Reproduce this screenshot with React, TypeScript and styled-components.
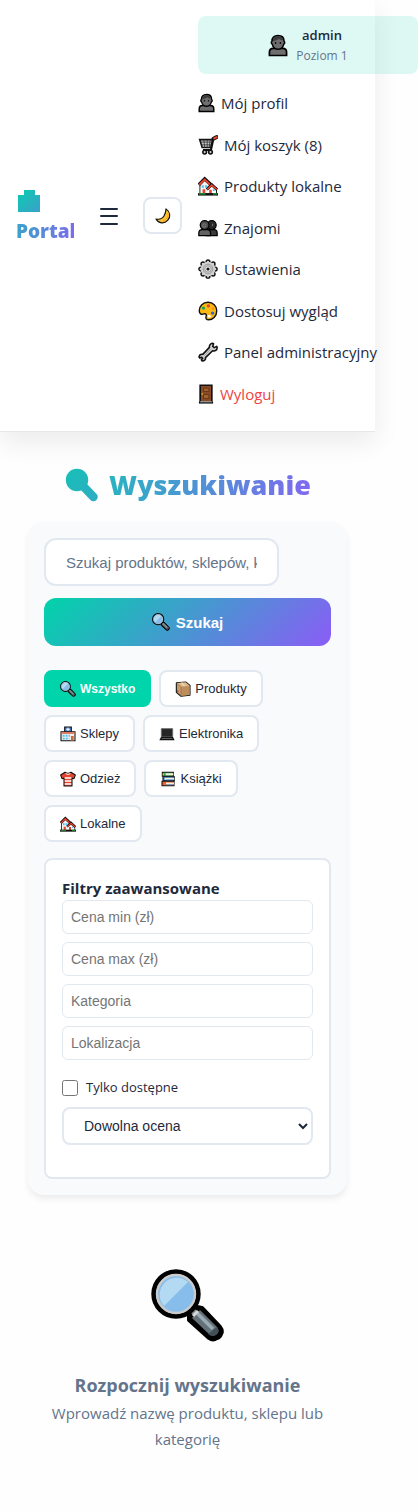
import React from 'react';
import styled, { createGlobalStyle, css } from 'styled-components';

const color = {
  text: '#1e293b',
  muted: '#64748b',
  line: '#e2e8f0',
  panel: '#f8fafc',
  mint: '#00d4aa',
  violet: '#8b5cf6',
  danger: '#ef4444',
};
const gradient = `linear-gradient(135deg, ${color.mint} 0%, ${color.violet} 100%)`;

const GlobalStyle = createGlobalStyle`
  *, *::before, *::after { box-sizing: border-box; margin: 0; padding: 0; }
  body {
    background: #fefefe;
    color: ${color.text};
    font-family: 'Open Sans', 'Noto Sans', sans-serif;
    font-size: 15px;
    line-height: 26px;
    overflow-x: hidden;
  }
  button, input, select { font-family: 'Liberation Sans', Arial, sans-serif; color: inherit; }
`;

/* ---------- icons ---------- */

const Svg = styled.svg<{ $w: number; $h: number }>`
  display: block;
  flex: none;
  width: ${(p) => p.$w}px;
  height: ${(p) => p.$h}px;
`;

type IconProps = { size?: number };
const ink = '#111';

const UserIcon = ({ size = 20 }: IconProps) => (
  <Svg $w={Math.round(size * 0.86)} $h={size} viewBox="0 0 21 24" aria-hidden="true">
    <path d="M1.5 22.5v-3.5q0-4 4-4h10q4 0 4 4v3.5z" fill="#6e6e6e" stroke="#000" strokeWidth="1.8" />
    <path d="M10.5 1.5c4.200 0 6.300 2.400 6.300 5.900 1 .6 1 2.700-.2 3.200-.8 3-3 5.400-6.100 5.400s-5.300-2.400-6.100-5.400c-1.200-.5-1.200-2.600-.2-3.200 0-3.500 2.100-5.900 6.300-5.900z" fill="#6e6e6e" stroke="#000" strokeWidth="1.6" />
    <path d="M5.200 7.500C5.200 4 7.500 2.300 10.500 2.300S15.800 4 15.800 6.600c-2 0-3.400-.6-4.300-1.600-1.400 1.300-4 2-6.300 2.500z" fill="#3b3b3b" />
    <path d="M8 8.300v2M13 8.300v2" stroke="#111" strokeWidth="1.500" />
  </Svg>
);

const CartIcon = () => (
  <Svg $w={20} $h={20} viewBox="0 0 24 24" aria-hidden="true">
    <path d="M2 5.500h15.500L15.500 15H5z" fill="#c9c9c9" stroke={ink} strokeWidth="1.900" />
    <path d="M3 8.500h13.500M4 11.800h12M7 6l1 9M11 6v9M14.500 6l-1 9" stroke="#333" strokeWidth="1" />
    <path d="M22 3l-3.500 1.200L15.500 18H6" fill="none" stroke={ink} strokeWidth="2.600" />
    <path d="M18.500 4.500l4-2" stroke={ink} strokeWidth="4.600" strokeLinecap="round" />
    <path d="M19.500 4l2.800-1.400" stroke="#e0452f" strokeWidth="2.600" strokeLinecap="round" />
    <circle cx="8" cy="20.500" r="2.200" fill="#ddd" stroke={ink} strokeWidth="1.900" />
    <circle cx="15" cy="20.500" r="2.200" fill="#ddd" stroke={ink} strokeWidth="1.900" />
  </Svg>
);

const HousesIcon = ({ size = 20 }: IconProps) => (
  <Svg $w={size} $h={size} viewBox="0 0 24 24" aria-hidden="true">
    <path d="M2.500 9.500V21H22v-7h-8V9.500L8 4z" fill="#fff" stroke={ink} strokeWidth="1.500" />
    <path d="M3 21V10l5-5 5.500 5v11z" fill="#f4f4f4" />
    <path d="M11 21v-6.500l5.500-4 5 4V21z" fill="#fff" />
    <path d="M1 10.500L8 3.500l7 6.500" fill="none" stroke={ink} strokeWidth="4" />
    <path d="M1.500 10.500L8 4.200l6.500 6.300" fill="none" stroke="#e8432e" strokeWidth="2.200" />
    <path d="M10.500 16l6-5.500 6.500 6" fill="none" stroke={ink} strokeWidth="3.600" />
    <path d="M11 16l5.500-5 6 5" fill="none" stroke="#e8432e" strokeWidth="2" />
    <path d="M4.500 11h2.500v3H4.500zM8.500 11H11v3H8.500zM17.800 16h2.200v2h-2.200z" fill="#4fc4ee" />
    <path d="M5.500 16h3.200v5H5.500zM13.500 16.500h3V21h-3z" fill="#e8432e" />
    <path d="M0 22h24" stroke={ink} strokeWidth="3" />
    <path d="M1 21.500h8M18 21.500h5" stroke="#1faa35" strokeWidth="1.600" />
  </Svg>
);

const PeopleIcon = () => (
  <Svg $w={20} $h={20} viewBox="0 0 24 24" aria-hidden="true">
    <path d="M10 21v-4q1-3 4-3h5q4 0 4 4v3z" fill="#3a3a3a" stroke="#000" strokeWidth="1.500" />
    <circle cx="16.500" cy="8.500" r="5.300" fill="#2b2b2b" stroke="#000" strokeWidth="1.500" />
    <path d="M1 21v-3q0-4 4-4h6q4 0 4 4v3z" fill="#636363" stroke="#000" strokeWidth="1.500" />
    <circle cx="8" cy="8.500" r="5.300" fill="#4c4c4c" stroke="#000" strokeWidth="1.500" />
    <circle cx="7.500" cy="9" r="2" fill="none" stroke="#8a8a8a" strokeWidth="1" />
    <path d="M17.500 7v2.500" stroke="#777" strokeWidth="1.200" />
  </Svg>
);

const teeth = [0, 1, 2, 3, 4, 5, 6, 7].map((i) => {
  const a = (i * Math.PI) / 4;
  return { x: 12 + 8.6 * Math.cos(a), y: 12 + 8.6 * Math.sin(a) };
});

const GearIcon = () => (
  <Svg $w={20} $h={20} viewBox="0 0 24 24" aria-hidden="true">
    {teeth.map((t, i) => (
      <circle key={i} cx={t.x} cy={t.y} r="2.300" fill="#cfcfcf" stroke={ink} strokeWidth="1.700" />
    ))}
    <circle cx="12" cy="12" r="8.800" fill="#d2d2d2" />
    <circle cx="12" cy="12" r="5.800" fill="none" stroke="#8f8f8f" strokeWidth="1" />
    <circle cx="12" cy="12" r="3.800" fill="#ededed" stroke="#8a8a8a" strokeWidth="1" />
    <circle cx="12" cy="12" r="1.900" fill={ink} />
  </Svg>
);

const PaletteIcon = () => (
  <Svg $w={20} $h={20} viewBox="0 0 24 24" aria-hidden="true">
    <path d="M12 1.500c6 0 10.500 4.300 10.500 10.200 0 6.300-4.500 10.800-9.500 10.800-3.300 0-4-1.800-3.300-3.800.9-2.500-.3-4-2.700-3.200-3 1-5.500-.2-5.500-3.700C1.500 6 6 1.500 12 1.500z" fill="#fdb913" stroke={ink} strokeWidth="1.700" />
    <circle cx="6.500" cy="8.500" r="2" fill="#18a558" />
    <circle cx="12.500" cy="5.800" r="2" fill="#e8432e" />
    <circle cx="18" cy="9" r="1.600" fill="#f58b1f" />
    <circle cx="17.500" cy="14.500" r="2" fill="#2d62d8" />
    <circle cx="13.500" cy="18.300" r="1.800" fill="#fff" />
  </Svg>
);

const WrenchIcon = () => (
  <Svg $w={20} $h={20} viewBox="0 0 24 24" aria-hidden="true">
    <path d="M17.500 1.500l1.200.5-1 3.300 1.800 1.400 3-1.500.5 1.300c0 3-2.500 4.800-5.500 4L9 18.700c.5 2.300-1.200 4-4 4l-1-1.400 1.700-1.600-1.200-1.400-2.300 1-1-1.300c.5-2.500 2.300-3.600 4.500-3.200l8-8.300c-.6-2.500 1.300-4.700 3.800-5z" fill="#d0d0d0" stroke={ink} strokeWidth="1.900" strokeLinejoin="round" />
    <path d="M7.500 16.500l8-8.300" stroke="#a5a5a5" strokeWidth="1.200" />
  </Svg>
);

const DoorIcon = () => (
  <Svg $w={16} $h={20} viewBox="0 0 19 24" aria-hidden="true">
    <path d="M2.500 1.500h14v20h-14z" fill="#8a4b25" stroke={ink} strokeWidth="2" />
    <path d="M6.500 5h6.500v4H6.500zM6.500 12.500h6.500v5H6.500z" fill="#a5602f" stroke="#5f3115" strokeWidth="1" />
    <circle cx="5" cy="12" r="1" fill="#fdc62e" />
    <path d="M1 22.300h17" stroke={ink} strokeWidth="2.400" />
    <path d="M2.500 21.300h14" stroke="#b5b5b5" strokeWidth="1.300" />
  </Svg>
);

const MoonIcon = () => (
  <Svg $w={16} $h={16} viewBox="0 0 24 24" aria-hidden="true">
    <path d="M16.500 1.300c6.500 4.500 7.500 12.200 2.500 17.400C14 24 5.500 23.600 1.500 16.500c5.500 1 9.500-.5 12-4.500 2-3.300 2.900-6.500 3-10.700z" fill="#fdc236" stroke={ink} strokeWidth="1.700" strokeLinejoin="round" />
    <path d="M19.500 8c1 5-2 10-8 11.500" fill="none" stroke="#f29a1c" strokeWidth="1.300" />
  </Svg>
);

const LensIcon = ({ size = 18 }: IconProps) => (
  <Svg $w={size} $h={size} viewBox="0 0 73 73" aria-hidden="true">
    <path d="M38 45l8-7 5 1 18 19q3 4 1 7-1 3-4 4-4 3-8 0L38 51z" fill="#000" stroke="#000" strokeWidth="4" strokeLinejoin="round" />
    <path d="M36 40l4-4 7 7-4 4z" fill="#7c888d" />
    <path d="M41 49l8-8 17 17q3 4 0 7t-7 1z" fill="#637278" />
    <path d="M46 44l16 16" stroke="#9cabb3" strokeWidth="3.500" />
    <path d="M42 47l5-5" stroke="#d6d6d6" strokeWidth="3" />
    <path d="M57 65l9-7q3 4 0 7-4 4-9 0z" fill="#434f56" />
    <circle cx="25" cy="25" r="22.300" fill="#86bdeb" stroke="#000" strokeWidth="4.800" />
    <circle cx="25" cy="25" r="19" fill="none" stroke="#cbcbcb" strokeWidth="2.400" />
    <path d="M13 37A17 17 0 0 1 37 13z" fill="#b3daf2" />
  </Svg>
);

const BoxIcon = () => (
  <Svg $w={16} $h={16} viewBox="0 0 24 24" aria-hidden="true">
    <path d="M2 2.500l14-1 6.500 5V21.500L9 23 2 17z" fill="#c69c6d" stroke={ink} strokeWidth="1.600" strokeLinejoin="round" />
    <path d="M9 8.500l13-1.500V21L9 22.500z" fill="#bd8d5c" />
    <path d="M2.500 3L9 8.500 22 7l-6-5z" fill="#dcb98d" />
    <path d="M2.500 3.500L9 8.500v14" fill="none" stroke="#8f6a44" strokeWidth="1" />
    <path d="M14.500 7l-5-4.300" stroke="#efd9b8" strokeWidth="2" />
    <path d="M4 14v3" stroke="#e33" strokeWidth="2" />
  </Svg>
);

const ShopIcon = () => (
  <Svg $w={16} $h={16} viewBox="0 0 24 24" aria-hidden="true">
    <path d="M7 1.500h10V9H7z" fill="#4f86d8" stroke={ink} strokeWidth="1.600" />
    <path d="M12 2.500v5M9.500 5h5" stroke="#fff" strokeWidth="1.500" />
    <path d="M1.500 8.500h21V22h-21z" fill="#f4ece8" stroke={ink} strokeWidth="1.600" />
    <path d="M2 10.500h20" stroke="#e06a50" strokeWidth="2.500" />
    <path d="M4 14.500h11" stroke="#4fc4ee" strokeWidth="3" strokeDasharray="3 1.500" />
    <path d="M4 19h10" stroke="#4fc4ee" strokeWidth="2.500" strokeDasharray="3 1.500" />
    <path d="M16.500 15h4v7h-4z" fill="#c9683c" />
  </Svg>
);

const LaptopIcon = () => (
  <Svg $w={16} $h={16} viewBox="0 0 24 24" aria-hidden="true">
    <path d="M3.500 4h17v12.500h-17z" fill="#252525" stroke="#6b6b6b" strokeWidth="1.400" />
    <path d="M3 16.500h18l2.500 5H.5z" fill="#111" />
    <path d="M4 18.700h16" stroke="#888" strokeWidth="1" />
  </Svg>
);

const ShirtIcon = () => (
  <Svg $w={16} $h={16} viewBox="0 0 24 24" aria-hidden="true">
    <path d="M7.500 1.800q4.500 3 9 0L23 6l-2 5.500-3-1V22.500H6V10.500l-3 1L1 6z" fill="#e4452f" stroke={ink} strokeWidth="1.600" strokeLinejoin="round" />
    <path d="M7 10.500h10M7 15h10M7 19.500h10" stroke="#fff" strokeWidth="2" />
    <path d="M8.500 4q3.500 2 7 0" fill="none" stroke="#fff" strokeWidth="1.500" />
  </Svg>
);

const BooksIcon = () => (
  <Svg $w={16} $h={16} viewBox="0 0 24 24" aria-hidden="true">
    <path d="M3.500 2H20v6H3.500z" fill="#39a94a" stroke={ink} strokeWidth="1.600" />
    <path d="M4.500 8.500h17v6h-17z" fill="#3f8fdc" stroke={ink} strokeWidth="1.600" />
    <path d="M3 15.500h18v6.500H3z" fill="#f0602d" stroke={ink} strokeWidth="1.600" />
    <path d="M8.500 5H20M7 11.500h14.500M9 18.700h12" stroke="#f6eedc" strokeWidth="3" />
    <path d="M9 13.200h12M9 20.500h11" stroke="#3f8fdc" strokeWidth="1" />
    <path d="M4.800 3.500v3" stroke="#ffd83a" strokeWidth="1.500" />
  </Svg>
);

const BagMark = () => (
  <Svg $w={24} $h={30} viewBox="0 0 24 30" aria-hidden="true">
    <defs>
      <linearGradient id="bag" gradientUnits="userSpaceOnUse" x1="-1" y1="-1" x2="59" y2="59">
        <stop stopColor={color.mint} />
        <stop offset="1" stopColor={color.violet} />
      </linearGradient>
    </defs>
    <path d="M2 9h6V4h11v5h5v17H2z" fill="url(#bag)" />
  </Svg>
);

const LensMark = () => (
  <Svg $w={34} $h={34} viewBox="0 0 34 34" aria-hidden="true">
    <defs>
      <linearGradient id="lens" gradientUnits="userSpaceOnUse" x1="-30" y1="-30" x2="160" y2="160">
        <stop stopColor={color.mint} />
        <stop offset="1" stopColor={color.violet} />
      </linearGradient>
    </defs>
    <circle cx="13" cy="12" r="11.200" fill="url(#lens)" />
    <path d="M19 18l10.500 11" stroke="url(#lens)" strokeWidth="8.500" strokeLinecap="round" />
  </Svg>
);

/* ---------- layout ---------- */

const Page = styled.div`
  margin-right: 43px;
`;

const Header = styled.header`
  display: flex;
  align-items: center;
  gap: 16px;
  padding: 16px;
  background: #fff;
  border-bottom: 1px solid #e5e7eb;
  box-shadow: 0 10px 25px rgba(0, 0, 0, 0.08);
`;

const GradientText = styled.span<{ $angle: number; $from: string; $to: string }>`
  background: linear-gradient(${(p) => p.$angle}deg, ${(p) => p.$from} 0%, ${(p) => p.$to} 100%);
  background-clip: text;
  -webkit-background-clip: text;
  color: transparent;
`;

const Logo = styled.a`
  display: flex;
  flex: none;
  flex-direction: column;
  width: 58px;
  font-size: 19px;
  font-weight: 800;
  line-height: 30px;
  text-decoration: none;
`;

const MenuButton = styled.button`
  display: grid;
  place-items: center;
  flex: none;
  width: 37px;
  height: 40px;
  border: 0;
  background: none;
`;

const ThemeButton = styled.button`
  display: grid;
  place-items: center;
  flex: none;
  width: 39px;
  height: 37px;
  border: 2px solid ${color.line};
  border-radius: 8px;
  background: #fff;
`;

const Nav = styled.nav`
  flex: none;
  width: 220px;
  padding-bottom: 8px;
`;

const UserCard = styled.div`
  display: flex;
  align-items: center;
  justify-content: center;
  gap: 8px;
  padding: 8px;
  margin-bottom: 16px;
  border-radius: 8px;
  background: rgba(0, 212, 170, 0.13);
  text-align: center;
`;

const UserName = styled.div`
  font-size: 13px;
  font-weight: 600;
  line-height: 22px;
`;

const UserLevel = styled.div`
  color: ${color.muted};
  font-size: 12px;
  line-height: 20px;
`;

const NavList = styled.ul`
  display: flex;
  flex-direction: column;
  justify-content: space-between;
  min-height: 317px;
  list-style: none;
`;

const NavLink = styled.a<{ $danger?: boolean }>`
  display: flex;
  align-items: center;
  gap: 6px;
  color: ${(p) => (p.$danger ? color.danger : color.text)};
  text-decoration: none;
  white-space: nowrap;
`;

const Main = styled.main`
  padding: 32px 28px 60px;
`;

const Title = styled.h1`
  display: flex;
  align-items: center;
  justify-content: center;
  gap: 11px;
  margin-bottom: 16px;
  font-size: 27px;
  font-weight: 800;
  line-height: 42px;
`;

const SearchCard = styled.section`
  padding: 16px;
  border-radius: 16px;
  background: ${color.panel};
  box-shadow: 0 4px 6px rgba(0, 0, 0, 0.07);
`;

const SearchForm = styled.form`
  display: grid;
  gap: 12px;
  margin-bottom: 24px;
`;

const SearchInput = styled.input`
  width: 82%;
  height: 48px;
  padding: 0 20px;
  border: 2px solid ${color.line};
  border-radius: 12px;
  background: #fff;
  font-size: 15px;
  &::placeholder { color: ${color.muted}; }
`;

const SearchButton = styled.button`
  display: flex;
  align-items: center;
  justify-content: center;
  gap: 6px;
  height: 48px;
  border: 0;
  border-radius: 12px;
  background: ${gradient};
  color: #fff;
  font-size: 15px;
  font-weight: 700;
`;

const Chips = styled.div`
  display: flex;
  flex-wrap: wrap;
  gap: 8px;
  margin-bottom: 16px;
`;

const Chip = styled.button<{ $active?: boolean }>`
  display: flex;
  align-items: center;
  gap: 4px;
  height: 37px;
  padding: 0 14px;
  border: 2px solid ${color.line};
  border-radius: 8px;
  background: #fff;
  font-size: 13px;
  ${(p) =>
    p.$active &&
    css`
      border-color: ${color.mint};
      background: ${color.mint};
      color: #fff;
      font-size: 12px;
      font-weight: 700;
    `}
`;

const Filters = styled.fieldset`
  display: grid;
  gap: 8px;
  min-width: 0;
  padding: 16px 16px 32px;
  border: 2px solid ${color.line};
  border-radius: 8px;
  background: #fff;
`;

const FiltersTitle = styled.h2`
  margin-bottom: -8px;
  font-size: 15px;
  font-weight: 700;
  line-height: 24px;
`;

const FilterInput = styled.input`
  width: 100%;
  height: 34px;
  padding: 0 8px;
  border: 1px solid ${color.line};
  border-radius: 6px;
  background: #fff;
  font-size: 14px;
`;

const CheckRow = styled.label`
  display: flex;
  align-items: center;
  gap: 8px;
  margin-top: 8px;
  font-size: 13px;
  line-height: 23px;
`;

const Checkbox = styled.input`
  width: 16px;
  height: 16px;
`;

const Select = styled.select`
  width: 100%;
  height: 38px;
  padding: 0 16px;
  border: 2px solid ${color.line};
  border-radius: 8px;
  background: #fff;
  font-size: 14px;
`;

const EmptyState = styled.section`
  display: flex;
  flex-direction: column;
  align-items: center;
  margin-top: 74px;
  color: ${color.muted};
  text-align: center;
`;

const EmptyTitle = styled.h2`
  margin-top: 28px;
  font-size: 18px;
  font-weight: 700;
  line-height: 30px;
`;

const EmptyText = styled.p`
  font-size: 15px;
  line-height: 26px;
`;

const links = [
  { icon: <UserIcon />, label: 'Mój profil' },
  { icon: <CartIcon />, label: 'Mój koszyk (8)' },
  { icon: <HousesIcon />, label: 'Produkty lokalne' },
  { icon: <PeopleIcon />, label: 'Znajomi' },
  { icon: <GearIcon />, label: 'Ustawienia' },
  { icon: <PaletteIcon />, label: 'Dostosuj wygląd' },
  { icon: <WrenchIcon />, label: 'Panel administracyjny' },
  { icon: <DoorIcon />, label: 'Wyloguj', danger: true },
];

const chips = [
  { icon: <LensIcon size={16} />, label: 'Wszystko', active: true },
  { icon: <BoxIcon />, label: 'Produkty' },
  { icon: <ShopIcon />, label: 'Sklepy' },
  { icon: <LaptopIcon />, label: 'Elektronika' },
  { icon: <ShirtIcon />, label: 'Odzież' },
  { icon: <BooksIcon />, label: 'Książki' },
  { icon: <HousesIcon size={16} />, label: 'Lokalne' },
];

const fields = ['Cena min (zł)', 'Cena max (zł)', 'Kategoria', 'Lokalizacja'];

export default function App() {
  return (
    <>
      <GlobalStyle />
      <Page>
        <Header>
          <Logo href="#">
            <BagMark />
            <GradientText $angle={90} $from="#3aa3cc" $to="#7b6cec">
              Portal
            </GradientText>
          </Logo>
          <MenuButton type="button" aria-label="Menu">
            <Svg $w={18} $h={18} viewBox="0 0 18 18" aria-hidden="true">
              <path d="M1 2h16M1 9h16M1 17h16" stroke={color.text} strokeWidth="2" strokeLinecap="round" />
            </Svg>
          </MenuButton>
          <ThemeButton type="button" aria-label="Tryb ciemny">
            <MoonIcon />
          </ThemeButton>
          <Nav>
            <UserCard>
              <UserIcon size={23} />
              <div>
                <UserName>admin</UserName>
                <UserLevel>Poziom 1</UserLevel>
              </div>
            </UserCard>
            <NavList>
              {links.map((l) => (
                <li key={l.label}>
                  <NavLink href="#" $danger={l.danger}>
                    {l.icon}
                    <span>{l.label}</span>
                  </NavLink>
                </li>
              ))}
            </NavList>
          </Nav>
        </Header>
        <Main>
          <Title>
            <LensMark />
            <GradientText $angle={100} $from="#28b4c0" $to="#8068f0">
              Wyszukiwanie
            </GradientText>
          </Title>
          <SearchCard>
            <SearchForm onSubmit={(e) => e.preventDefault()}>
              <SearchInput type="text" aria-label="Szukaj" placeholder="Szukaj produktów, sklepów, kategorii..." />
              <SearchButton type="submit">
                <LensIcon size={18} />
                <span>Szukaj</span>
              </SearchButton>
            </SearchForm>
            <Chips>
              {chips.map((c) => (
                <Chip key={c.label} type="button" $active={c.active}>
                  {c.icon}
                  <span>{c.label}</span>
                </Chip>
              ))}
            </Chips>
            <Filters>
              <FiltersTitle>Filtry zaawansowane</FiltersTitle>
              {fields.map((f) => (
                <FilterInput key={f} type="text" aria-label={f} placeholder={f} />
              ))}
              <CheckRow>
                <Checkbox type="checkbox" />
                <span>Tylko dostępne</span>
              </CheckRow>
              <Select aria-label="Ocena" defaultValue="any">
                <option value="any">Dowolna ocena</option>
              </Select>
            </Filters>
          </SearchCard>
          <EmptyState>
            <LensIcon size={73} />
            <EmptyTitle>Rozpocznij wyszukiwanie</EmptyTitle>
            <EmptyText>Wprowadź nazwę produktu, sklepu lub kategorię</EmptyText>
          </EmptyState>
        </Main>
      </Page>
    </>
  );
}
